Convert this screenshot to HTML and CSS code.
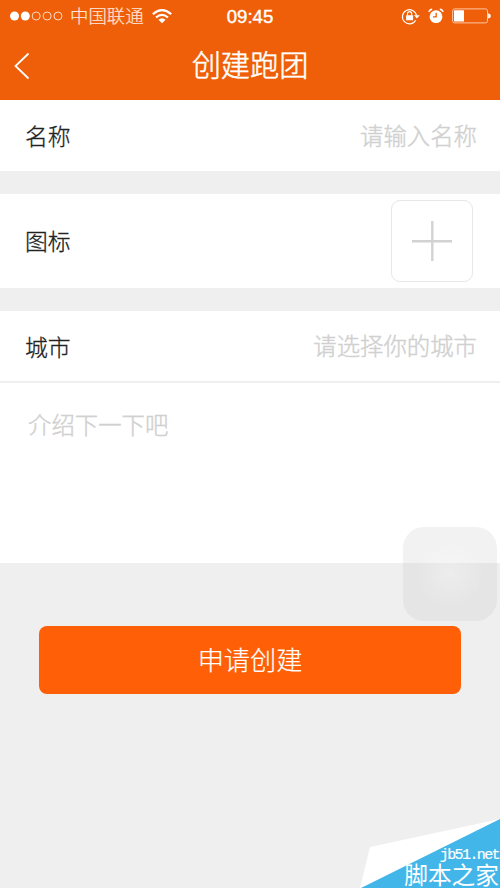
FILE: index.html
```html
<!DOCTYPE html>
<html lang="zh-CN">
<head>
<meta charset="utf-8">
<title>创建跑团</title>
<link rel="stylesheet" href="styles.css">
</head>
<body>
<div class="screen">
  <header class="header">
    <div class="status">
      <div class="status-left">
        <svg class="signal" width="53" height="10" viewBox="0 0 53 10">
          <g fill="#fff"><circle cx="4.5" cy="5" r="4.5"/><circle cx="15.3" cy="5" r="4.5"/></g>
          <g fill="none" stroke="#ffd9c0" stroke-width="1"><circle cx="26.2" cy="5" r="4"/><circle cx="37.1" cy="5" r="4"/><circle cx="48" cy="5" r="4"/></g>
        </svg>
        <span class="carrier">中国联通</span>
        <svg class="wifi" width="20" height="15" viewBox="0 0 20 15">
          <g fill="none" stroke="#fff" stroke-width="2.1"><path d="M.8 5.1Q10-2.9 19.2 5.1"/><path d="M4 8.5Q10 3.3 16 8.5"/></g>
          <path d="M6.4 10.7Q10 7.7 13.6 10.7L10 14.3Z" fill="#fff"/>
        </svg>
      </div>
      <span class="time">09:45</span>
      <div class="status-right">
        <svg width="19" height="17" viewBox="0 0 19 17">
          <path d="M14.7 12.3A7.1 7.1 0 1 1 15.5 7.5" fill="none" stroke="#fff" stroke-width="1.1"/>
          <path d="M13 7.3h5.8l-2.9 3.3z" fill="#fff"/>
          <rect x="5.1" y="7.3" width="7" height="5" rx=".5" fill="#fff"/>
          <path d="M6.5 7.5V5.7a2.1 2.1 0 0 1 4.2 0v1.8" fill="none" stroke="#fff" stroke-width="1.1"/>
        </svg>
        <svg width="16" height="16" viewBox="0 0 16 16">
          <circle cx="8" cy="8.7" r="6.4" fill="#fff"/>
          <path d="M8.2 4.8v4.1H5" fill="none" stroke="#ef5f09" stroke-width="1.3"/>
          <path d="M1 4Q1.4 1.5 4.2 1.2M15 4Q14.6 1.5 11.8 1.2" fill="none" stroke="#fff" stroke-width="1.4"/>
        </svg>
        <svg width="39" height="16" viewBox="0 0 39 16">
          <rect x=".6" y=".9" width="34.9" height="14" rx="2" fill="none" stroke="#ffc7a5"/>
          <rect x="2" y="2.3" width="10" height="11.3" rx=".6" fill="#fff"/>
          <path d="M36.1 5.2q2.8.5 2.8 2.7t-2.8 2.7z" fill="#fff"/>
        </svg>
      </div>
    </div>
    <div class="nav">
      <svg class="back" width="16" height="28" viewBox="0 0 16 28"><path d="M14.5 1.5L1.5 14L14.5 26.5" fill="none" stroke="#fff" stroke-width="1.8"/></svg>
      <h1 class="title">创建跑团</h1>
    </div>
  </header>
  <main>
    <section class="row row-name"><span class="label">名称</span><span class="hint">请输入名称</span></section>
    <section class="row row-icon"><span class="label">图标</span>
      <div class="picker"><svg width="40" height="40" viewBox="0 0 40 40"><path d="M0 20.2H40M20.3 0V40" stroke="#d2d2d2" stroke-width="2.4"/></svg></div>
    </section>
    <section class="row row-city"><span class="label">城市</span><span class="hint">请选择你的城市</span></section>
    <section class="intro">介绍下一下吧</section>
    <div class="submit">申请创建</div>
  </main>
  <div class="assist"></div>
  <div class="mark">
    <svg class="mark-shape" width="140" height="69" viewBox="0 0 140 69"><path d="M0 69L10 28L140 0V20L10 69Z" fill="#fff"/><path d="M1 69L140 0V69Z" fill="#42b6e9"/></svg>
    <div class="mark-text"><span class="mark-url">jb51.net</span><span class="mark-name">脚本之家</span></div>
  </div>
</div>
</body>
</html>
```
FILE: styles.css
```css
* { box-sizing: border-box; }
body {
  margin: 0;
  font-family: "Liberation Sans", "Noto Sans CJK SC", sans-serif;
  font-weight: 300;
}
svg { display: block; flex: none; }
.screen {
  position: relative;
  width: 500px;
  height: 888px;
  overflow: hidden;
  background: #efefef;
}
.header { height: 100px; background: #ef5f09; color: #fff; }
.status {
  height: 32px;
  display: grid;
  grid-template-columns: 1fr auto 1fr;
  align-items: center;
  padding: 0 9px 0 10px;
}
.status-left { display: flex; align-items: center; }
.carrier { margin-left: 7px; padding-top: 2px; font-size: 18.4px; line-height: 30px; color: #ffe6d8; -webkit-text-stroke: .2px #ffe6d8; }
.wifi { margin-left: 8px; }
.time { margin-right: 1px; font-size: 18.6px; line-height: 30px; padding-top: 1px; -webkit-text-stroke: .4px #fff; }
.status-right { display: flex; align-items: center; justify-content: flex-end; gap: 8px; }
.nav {
  height: 68px;
  display: grid;
  grid-template-columns: 1fr auto 1fr;
  align-items: center;
  padding: 0 14px;
}
.title { margin: 0; font-size: 29.2px; line-height: 40px; font-weight: 300; -webkit-text-stroke: .5px #fff; }
.row {
  display: flex;
  align-items: center;
  justify-content: space-between;
  padding: 0 23px 2px 25px;
  background: #fff;
}
.row-name { height: 71px; margin-bottom: 23px; }
.row-icon { height: 94px; margin-bottom: 23px; padding-right: 27px; padding-bottom: 0; }
.row-icon .label { padding-bottom: 1px; }
.row-name .label, .row-city .label { padding-top: 2px; }
.row-city { height: 72px; border-bottom: 2px solid #efefef; }
.label { font-size: 22.8px; color: #222; -webkit-text-stroke: .3px #222; }
.hint, .intro { font-size: 23.4px; color: #d0d0d0; -webkit-text-stroke: .4px #d0d0d0; }
.picker {
  width: 82px;
  height: 82px;
  border: 1px solid #e7e7e7;
  border-radius: 9px;
  display: flex;
  align-items: center;
  justify-content: center;
}
.intro {
  height: 180px;
  padding: 26px 28px;
  line-height: 35px;
  background: #fff;
}
.submit {
  margin: 63px 39px 0;
  height: 68px;
  padding-top: 1px;
  border-radius: 8px;
  background: #ff5f07;
  color: #fff;
  font-size: 26.2px;
  line-height: 68px;
  text-align: center;
  -webkit-text-stroke: .2px #fff;
}
.assist {
  position: absolute;
  left: 403px;
  top: 527px;
  width: 94px;
  height: 94px;
  border-radius: 21px;
  background:
    radial-gradient(circle, rgba(255,255,255,.3) 0, rgba(255,255,255,0) 55%),
    rgba(190,190,190,.2);
}
.mark { position: absolute; right: 0; bottom: 0; width: 140px; height: 69px; color: #fff; }
.mark-text {
  position: absolute;
  right: 1px;
  bottom: -1px;
  display: flex;
  flex-direction: column;
  align-items: flex-end;
}
.mark-url { font: 15px/16px "Liberation Mono", monospace; letter-spacing: -1.6px; -webkit-text-stroke: .2px #fff; margin-bottom: -1px; padding-bottom: 1px; }
.mark-name { font-size: 23.7px; line-height: 25px; font-weight: 400; }
```
